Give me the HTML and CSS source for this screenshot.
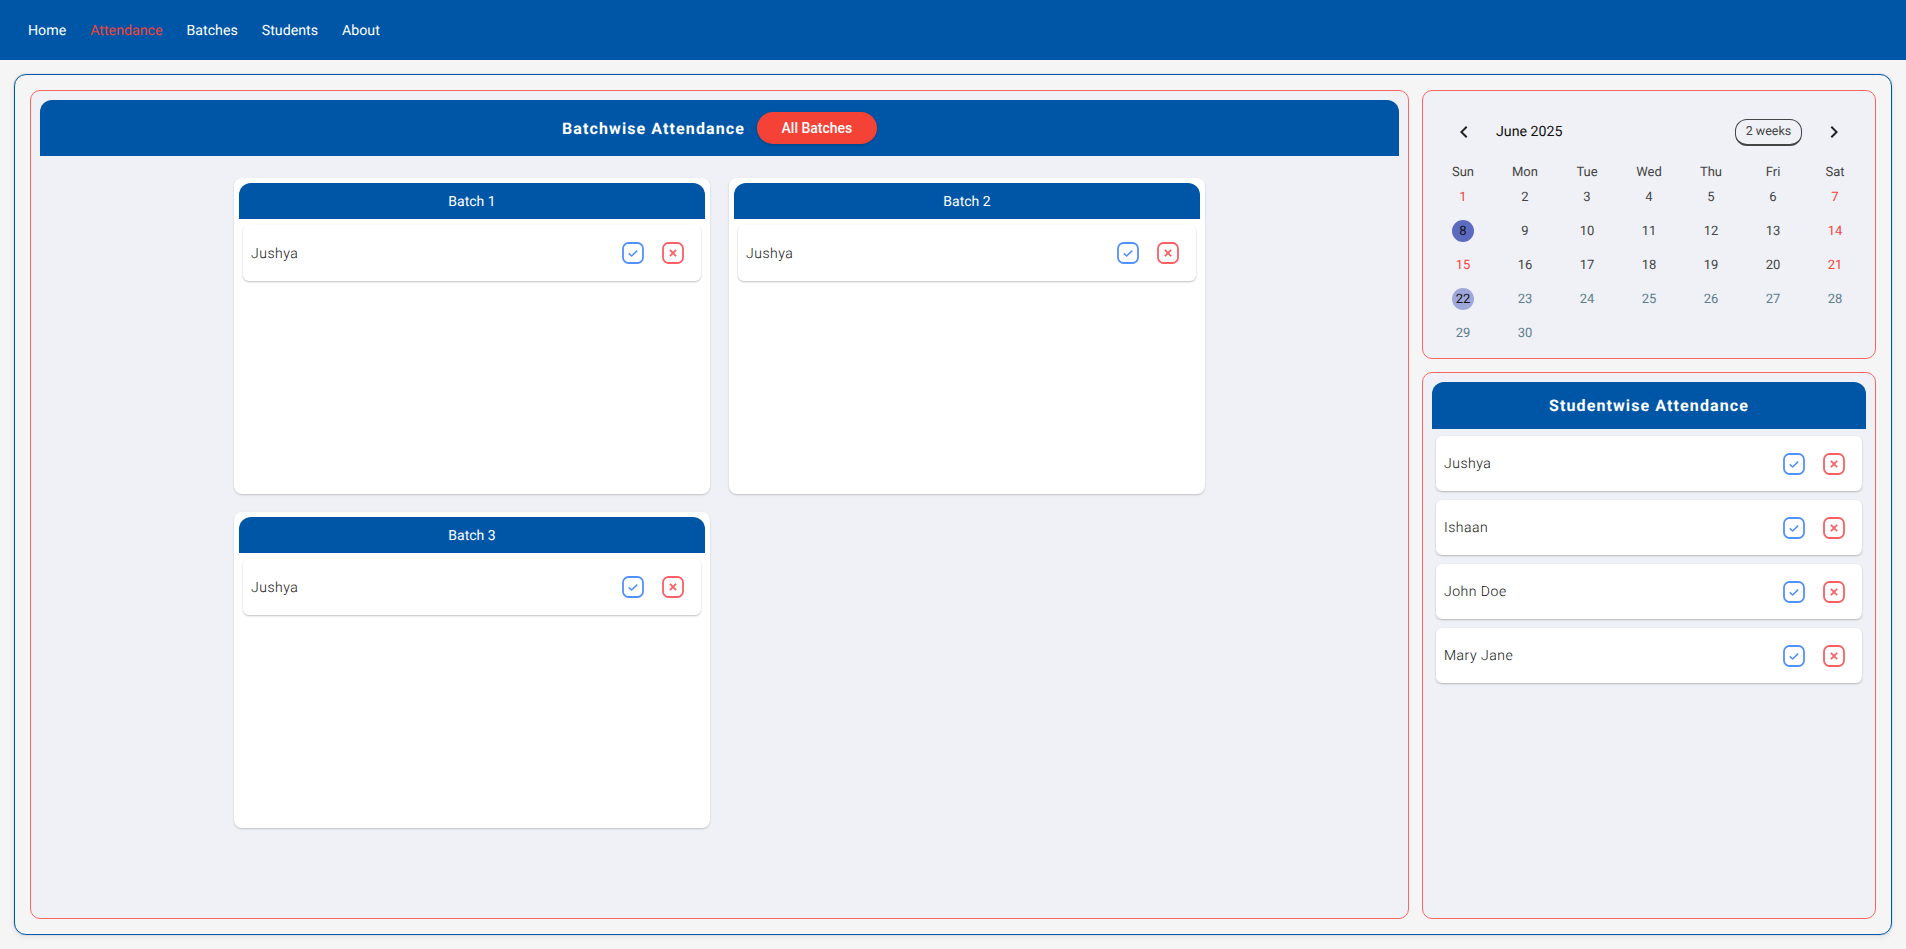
FILE: index.html
```html
<!DOCTYPE html>
<html lang="en">
<head>
    <meta charset="UTF-8">
    <meta name="viewport" content="width=device-width, initial-scale=1.0">
    <title>Attendance</title>
    <link rel="stylesheet" href="styles.css">
</head>
<body>
    <svg class="icon-defs" width="0" height="0">
        <symbol id="icon-check" viewBox="0 0 22 22">
            <rect x="1" y="1" width="20" height="20" rx="5.5" fill="none" stroke="currentColor" stroke-width="1.8"/>
            <path d="M6.7 11.4l2.9 2.6 5.6-5.4" fill="none" stroke="currentColor" stroke-width="1.6"/>
        </symbol>
        <symbol id="icon-cross" viewBox="0 0 22 22">
            <rect x="1" y="1" width="20" height="20" rx="5.5" fill="none" stroke="currentColor" stroke-width="1.8"/>
            <path d="M7.9 7.9l6.2 6.2M14.1 7.9l-6.2 6.2" fill="none" stroke="currentColor" stroke-width="1.8"/>
        </symbol>
    </svg>

    <nav class="navbar">
        <a href="#">Home</a>
        <a href="#" class="active">Attendance</a>
        <a href="#">Batches</a>
        <a href="#">Students</a>
        <a href="#">About</a>
    </nav>

    <div class="frame">
        <div class="panel batchwise">
            <div class="panel-header">
                <h2>Batchwise Attendance</h2>
                <button class="pill-btn">All Batches</button>
            </div>
            <div class="batch-grid">
                <div class="batch-card">
                    <div class="batch-title">Batch 1</div>
                    <div class="student-row">
                        <span class="student-name">Jushya</span>
                        <span class="mark-btns">
                            <svg class="mark check"><use href="#icon-check"/></svg>
                            <svg class="mark cross"><use href="#icon-cross"/></svg>
                        </span>
                    </div>
                </div>
                <div class="batch-card">
                    <div class="batch-title">Batch 2</div>
                    <div class="student-row">
                        <span class="student-name">Jushya</span>
                        <span class="mark-btns">
                            <svg class="mark check"><use href="#icon-check"/></svg>
                            <svg class="mark cross"><use href="#icon-cross"/></svg>
                        </span>
                    </div>
                </div>
                <div class="batch-card">
                    <div class="batch-title">Batch 3</div>
                    <div class="student-row">
                        <span class="student-name">Jushya</span>
                        <span class="mark-btns">
                            <svg class="mark check"><use href="#icon-check"/></svg>
                            <svg class="mark cross"><use href="#icon-cross"/></svg>
                        </span>
                    </div>
                </div>
            </div>
        </div>

        <div class="side">
            <div class="panel calendar">
                <div class="cal-header">
                    <svg class="chevron" viewBox="0 0 24 24"><path d="M15.4 7.4L14 6l-6 6 6 6 1.4-1.4-4.6-4.6z"/></svg>
                    <span class="cal-month">June 2025</span>
                    <span class="cal-format">2 weeks</span>
                    <svg class="chevron" viewBox="0 0 24 24"><path d="M8.6 16.6L10 18l6-6-6-6-1.4 1.4 4.6 4.6z"/></svg>
                </div>
                <div class="cal-grid">
                    <div class="cal-dow">Sun</div><div class="cal-dow">Mon</div><div class="cal-dow">Tue</div><div class="cal-dow">Wed</div><div class="cal-dow">Thu</div><div class="cal-dow">Fri</div><div class="cal-dow">Sat</div>
                    <div class="day holiday">1</div><div class="day">2</div><div class="day">3</div><div class="day">4</div><div class="day">5</div><div class="day">6</div><div class="day holiday">7</div>
                    <div class="day"><span class="selected">8</span></div><div class="day">9</div><div class="day">10</div><div class="day">11</div><div class="day">12</div><div class="day">13</div><div class="day holiday">14</div>
                    <div class="day holiday">15</div><div class="day">16</div><div class="day">17</div><div class="day">18</div><div class="day">19</div><div class="day">20</div><div class="day holiday">21</div>
                    <div class="day"><span class="today">22</span></div><div class="day muted">23</div><div class="day muted">24</div><div class="day muted">25</div><div class="day muted">26</div><div class="day muted">27</div><div class="day muted">28</div>
                    <div class="day muted">29</div><div class="day muted">30</div>
                </div>
            </div>

            <div class="panel studentwise">
                <div class="panel-header student-header">
                    <h2>Studentwise Attendance</h2>
                </div>
                <div class="student-list">
                    <div class="student-row">
                        <span class="student-name">Jushya</span>
                        <span class="mark-btns">
                            <svg class="mark check"><use href="#icon-check"/></svg>
                            <svg class="mark cross"><use href="#icon-cross"/></svg>
                        </span>
                    </div>
                    <div class="student-row">
                        <span class="student-name">Ishaan</span>
                        <span class="mark-btns">
                            <svg class="mark check"><use href="#icon-check"/></svg>
                            <svg class="mark cross"><use href="#icon-cross"/></svg>
                        </span>
                    </div>
                    <div class="student-row">
                        <span class="student-name">John Doe</span>
                        <span class="mark-btns">
                            <svg class="mark check"><use href="#icon-check"/></svg>
                            <svg class="mark cross"><use href="#icon-cross"/></svg>
                        </span>
                    </div>
                    <div class="student-row">
                        <span class="student-name">Mary Jane</span>
                        <span class="mark-btns">
                            <svg class="mark check"><use href="#icon-check"/></svg>
                            <svg class="mark cross"><use href="#icon-cross"/></svg>
                        </span>
                    </div>
                </div>
            </div>
        </div>
    </div>
</body>
</html>
```

FILE: styles.css
```css
* {
    box-sizing: border-box;
}

body {
    font-family: Roboto, sans-serif;
    text-rendering: geometricPrecision;
    background: #f5f5f5;
    margin: 0;
    height: 949px;
    overflow: hidden;
}

.icon-defs {
    display: block;
    height: 0;
}

.navbar {
    background: #0056a6;
    height: 60px;
    padding: 2px 28px 0;
    display: flex;
    align-items: center;
    gap: 24px;
}

.navbar a {
    color: white;
    font-size: 14.2px;
    text-decoration: none;
}

.navbar a.active {
    color: #f44336;
}

.frame {
    margin: 14px 14px 0;
    height: 861px;
    padding: 15px;
    border: 1px solid #0056a6;
    border-radius: 12px;
    box-shadow: 0 0 1px rgba(0,86,166,0.6), 0 2px 6px rgba(0,0,0,0.08);
    display: grid;
    grid-template-columns: 1fr 454px;
    gap: 13px;
}

.panel {
    background: #f0f1f6;
    border: 1px solid #fb6660;
    border-radius: 10px;
    padding: 9px;
}

.side {
    display: flex;
    flex-direction: column;
    gap: 13px;
}

.panel-header {
    background: #0056a6;
    color: white;
    height: 56px;
    border-radius: 12px 12px 0 0;
    display: flex;
    justify-content: center;
    align-items: center;
    gap: 12px;
}

.panel-header h2 {
    margin: 0;
    font-size: 16px;
    font-weight: 700;
    letter-spacing: 1.1px;
}

.pill-btn {
    background: #f44336;
    color: white;
    border: none;
    height: 32px;
    width: 120px;
    border-radius: 16px;
    font-family: inherit;
    font-size: 14px;
    font-weight: 500;
    box-shadow: 0 1px 3px rgba(0,0,0,0.2);
}

.batch-grid {
    display: grid;
    grid-template-columns: 476px 476px;
    grid-auto-rows: 316px;
    justify-content: center;
    gap: 18px 19px;
    margin-top: 22px;
}

.batch-card {
    background: white;
    border-radius: 8px;
    padding: 5px;
    box-shadow: 0 1px 2px rgba(0,0,0,0.2);
}

.batch-title {
    background: #0056a6;
    color: white;
    height: 36px;
    padding-top: 1px;
    border-radius: 12px 12px 0 0;
    display: flex;
    justify-content: center;
    align-items: center;
    font-size: 14px;
    margin-bottom: 6px;
}

.student-row {
    background: white;
    height: 56px;
    margin: 0 4px;
    padding: 0 17px 0 8px;
    border-radius: 6px;
    box-shadow: 0 1px 2px rgba(0,0,0,0.25);
    display: flex;
    justify-content: space-between;
    align-items: center;
}

.student-name {
    color: #111;
    font-size: 14px;
    font-weight: 300;
    letter-spacing: 0.5px;
    padding-top: 1px;
}

.mark-btns {
    display: flex;
    gap: 18px;
}

.mark {
    width: 22px;
    height: 22px;
    display: block;
}

.mark.check {
    color: #5291fb;
}

.mark.cross {
    color: #fa5f63;
}

.calendar {
    height: 269px;
    padding: 28px 9px 0;
}

.cal-header {
    height: 26px;
    margin-bottom: 20px;
    padding: 0 20px;
    display: flex;
    align-items: center;
}

.chevron {
    width: 24px;
    height: 24px;
    fill: #222;
    flex: none;
}

.cal-month {
    font-size: 14.2px;
    color: #111;
    margin-left: 20px;
    flex-grow: 1;
}

.cal-format {
    width: 67px;
    height: 27px;
    margin-right: 20px;
    border: 1px solid #444;
    border-bottom-width: 2px;
    border-radius: 12px;
    color: #444;
    font-size: 12.5px;
    display: flex;
    justify-content: center;
    align-items: center;
}

.cal-grid {
    display: grid;
    grid-template-columns: repeat(7, 62px);
    grid-template-rows: 15px repeat(5, 34px);
}

.cal-dow {
    text-align: center;
    font-size: 13px;
    line-height: 16px;
    color: #444;
}

.day {
    display: flex;
    justify-content: center;
    align-items: center;
    font-size: 13px;
    color: #444;
}

.day.holiday {
    color: #f44336;
}

.day.muted {
    color: #607d8b;
}

.selected,
.today {
    width: 22px;
    height: 22px;
    border-radius: 50%;
    color: #111;
    display: flex;
    justify-content: center;
    align-items: center;
}

.selected {
    background: #5c6bc0;
}

.today {
    background: #9fa8da;
}

.studentwise {
    flex-grow: 1;
}

.student-header {
    height: 47px;
}

.student-list {
    display: flex;
    flex-direction: column;
    gap: 9px;
    margin-top: 7px;
}

.student-list .student-row {
    height: 55px;
}
```
